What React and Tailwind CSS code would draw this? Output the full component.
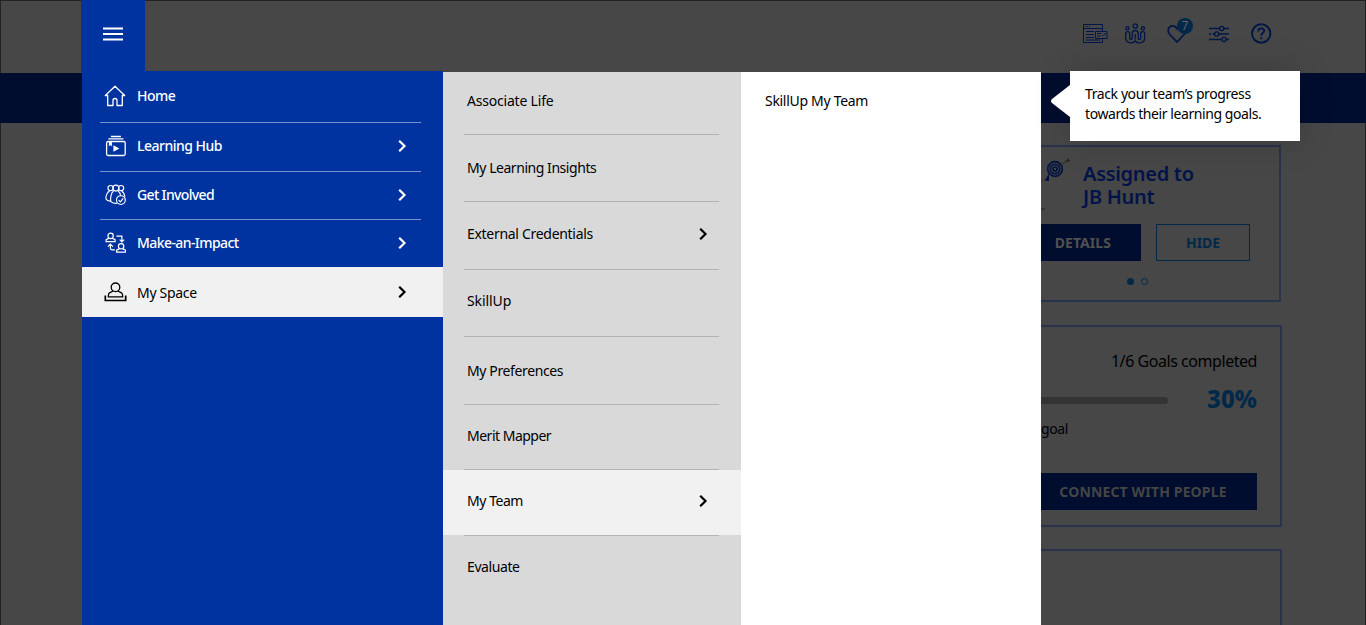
import React from "react";

const NEWS = (
  <svg width="25" height="21" viewBox="0 0 25 21" fill="none" stroke="#001648" strokeWidth="1">
    <path d="M19.500 8V1.500H.5v18h19v-4M.5 5.500h19M2 3.500h1M4 3.500h1M6 3.500h1M3 8.500h8M3 11.500h8M3 14.500h8M3 17h14" />
    <path d="M12.500 8.500h11.500v7H12.500zM14 10.500h4M14 13h4M19 11.500l1.500 1.500 2.500-3" />
  </svg>
);

const PEOPLE = (
  <svg width="21" height="21" viewBox="0 0 21 21" fill="none" stroke="#001648" strokeWidth="1.300">
    <circle cx="2.500" cy="5.300" r="1.600" />
    <circle cx="10.200" cy="3" r="2.200" />
    <circle cx="17.900" cy="5.300" r="1.600" />
    <path d="M.7 10.500c0-2.500 4-2.500 4 0V15c0 2 2.500 2 2.500 0v-4.500c0-4 6-4 6 0V15c0 2 2.500 2 2.500 0v-4.500c0-2.500 4-2.500 4 0V15c0 5-6.500 6.500-9.500 3C7.200 21.500.7 20 .7 15z" />
    <path d="M10.200 11v5.500" />
  </svg>
);

const HEART = (
  <svg width="20" height="20" viewBox="0 0 20 20" fill="none" stroke="#001648" strokeWidth="1.800">
    <path d="M10 18 2.800 10.500C.5 8 .8 4.300 3 2.800c2.500-1.700 5.200-.8 7 2 1.800-2.800 4.500-3.700 7-2 2.200 1.500 2.500 5.200.2 7.700z" />
  </svg>
);

const SLIDERS = (
  <svg width="21" height="18" viewBox="0 0 21 18" fill="none" stroke="#001648" strokeWidth="1.400">
    <path d="M0 3.500h10.500M15 3.500h5M0 9h2M3.500 9h2M10 9h10M0 14.500h12.500M17.500 14.500h2.500" />
    <circle cx="12.700" cy="3.500" r="2.100" />
    <circle cx="7.700" cy="9" r="2.100" />
    <circle cx="15" cy="14.500" r="2.100" />
  </svg>
);

const HELP = (
  <svg width="21" height="21" viewBox="0 0 21 21" fill="none" stroke="#001648" strokeWidth="1.900">
    <circle cx="10.200" cy="10.500" r="9.200" />
    <path d="M7.200 8.500c0-4 6-4 6-.7 0 2.200-3 2.200-3 4.900M10.200 14.200v2" />
  </svg>
);

const HOME = (
  <svg width="22" height="22" viewBox="0 0 22 22" fill="none" stroke="currentColor" strokeWidth="1.300" strokeLinejoin="round">
    <path d="M1.300 10.500 11 1.200l9.700 9.300h-2.400v10H13v-5c0-2.700-4-2.700-4 0v5H3.700v-10z" />
  </svg>
);

const LEARN = (
  <svg width="22" height="22" viewBox="0 0 22 22" fill="none" stroke="currentColor" strokeWidth="1.300">
    <rect x="2.600" y="6.500" width="18.600" height="14" rx="1.500" />
    <path d="M4.400 3.800h15M6.900 1.500h10" />
    <path d="M4.900 6.500h3v5L6.400 10l-1.500 1.500zM9.400 10.200v6.600l6-3.300z" fill="currentColor" stroke="none" />
  </svg>
);

const INVOLVED = (
  <svg width="22" height="22" viewBox="0 0 22 22" fill="none" stroke="currentColor" strokeWidth="1.150">
    <g transform="translate(.6 -.4)">
      <circle cx="6" cy="4.500" r="2.600" />
      <circle cx="16.500" cy="4.500" r="2.600" />
      <circle cx="11.300" cy="4.500" r="3" />
      <path d="M5 7.500c-2.500 1-4 5-3.600 8 .8 1.500 3 2.200 5 2M9 7.500c-2.500 1.500-3.500 7-2.700 10.500 1.500 1.300 4 2 6 1.800M13.500 7.500c1.500 1 2.300 2.700 2.600 4.500M17 7.500c1.800 1 2.800 3 3.300 5.500" />
      <circle cx="16.300" cy="16.500" r="4.400" />
      <path d="m14.100 16.500 1.600 1.700 3-3.500" />
    </g>
  </svg>
);

const IMPACT = (
  <svg width="22" height="22" viewBox="0 0 22 22" fill="none" stroke="currentColor" strokeWidth="1.200">
    <g transform="translate(.4 -.4)">
      <circle cx="6.200" cy="4.300" r="2.700" />
      <path d="M4.700 6.500 1.700 8v2h9V8l-3-1.500" />
      <circle cx="16.700" cy="14.700" r="2.700" />
      <path d="m15.200 17-3 1.500v2h9v-2l-3-1.500M12 4.500h5.500V10M15.300 8l2.200 2.300L19.700 8M10.500 18.300H8c-1.500 0-2-.7-2-2V12.500M3.500 15 6 12.500 8.500 15" />
    </g>
  </svg>
);

const SPACE = (
  <svg width="24" height="20" viewBox="0 0 24 20" fill="none" stroke="currentColor" strokeWidth="1.300">
    <circle cx="11.500" cy="5.300" r="4.300" />
    <path d="M9.200 9 5.500 10.800c-1 .6-1.200 2.200-1.200 4h14.400c0-1.800-.2-3.400-1.200-4L13.800 9" />
    <path d="M1.300 13.500v5h20.400v-5" strokeWidth="1.700" />
  </svg>
);

const TARGET = (
  <svg width="32" height="54" viewBox="0 0 32 54" fill="none">
    <g stroke="#001240" strokeWidth="1.700">
      <circle cx="15" cy="12" r="7.300" />
      <circle cx="15" cy="12" r="4.700" />
      <circle cx="15" cy="12" r="2" />
    </g>
    <path d="m17 10 10-6" stroke="#292929" />
    <path d="m27 5-1-2 3-2-.5 2 2 .3-3 2z" fill="#252525" />
    <path d="M9 17v7H4.500l3-5z" fill="#001240" />
    <path d="M2 21v4M5 21v3" stroke="#4d3526" />
    <path d="M0 52h5" stroke="#242424" />
  </svg>
);

function Chevron() {
  return (
    <svg width="10" height="14" viewBox="0 0 10 14" fill="none" stroke="currentColor" strokeWidth="2.200">
      <path d="M2.200 1.700 7.500 7l-5.300 5.300" />
    </svg>
  );
}

const MAIN = [
  { label: "Home", icon: HOME, row: "h-[51px] pb-px", text: "tracking-[-0.5px]" },
  { label: "Learning Hub", icon: LEARN, row: "h-[48px] pb-[2px]", text: "tracking-[-0.5px]", more: true },
  { label: "Get Involved", icon: INVOLVED, row: "h-[47px] pb-px", text: "tracking-[-0.65px]", more: true },
  { label: "Make-an-Impact", icon: IMPACT, row: "h-[47px] pb-px", text: "tracking-[-0.58px]", more: true },
];

const SUB = [
  { label: "Associate Life", row: "h-[63px] pt-[19px]", text: "tracking-[-0.2px]" },
  { label: "My Learning Insights", row: "h-[67px] pt-[23px]", text: "tracking-[-0.45px]" },
  { label: "External Credentials", row: "h-[68px] pt-[22px]", text: "tracking-[-0.3px]", more: true },
  { label: "SkillUp", row: "h-[67px] pt-[21px]", text: "tracking-[-0.1px]" },
  { label: "My Preferences", row: "h-[68px] pt-[24px]", text: "tracking-[-0.38px]" },
  { label: "Merit Mapper", row: "h-[65px] pt-[21px]", text: "tracking-[-0.5px]" },
  { label: "My Team", row: "h-[66px] pt-[21px]", text: "tracking-[-0.45px]", more: true, active: true },
  { label: "Evaluate", row: "h-[66px] pt-[21px]", text: "tracking-[-0.4px]", last: true },
];

function Backdrop() {
  return (
    <div className="flex h-[625px] flex-col border-x border-t border-[#222222] bg-[#474747]">
      <header className="flex h-[72px] shrink-0 items-start justify-end pr-[93px] pt-[22px]">
        <div className="flex h-[21px] items-center">
          <div className="w-[42px]">{NEWS}</div>
          <div className="w-[42px]">{PEOPLE}</div>
          <div className="relative w-[42px]">
            {HEART}
            <span className="absolute -top-[6px] left-[10px] flex size-4 items-center justify-center rounded-full bg-[#002949] text-[12px] leading-none text-[#626262]">7</span>
          </div>
          <div className="w-[42px]">{SLIDERS}</div>
          <div>{HELP}</div>
        </div>
      </header>
      <div className="-mx-px h-[50px] shrink-0 bg-[#000d2e]" />
      <main className="flex flex-col items-end pr-[83px] pt-[22px]">
        <section className="mr-px h-[157px] w-[280px] border-2 border-[#29334d] pl-[37px] pt-[10px]">
          <div className="flex h-[67px]">
            <div className="w-[43px]">{TARGET}</div>
            <h2 className="pt-[5px] text-[20px] font-semibold leading-[23px] tracking-[-0.3px] text-[#001449]">
              Assigned to
              <br />
              JB Hunt
            </h2>
          </div>
          <div className="flex gap-[15px] text-[14px] font-bold">
            <button className="h-[37px] w-[101px] bg-[#000d2e] pr-[30px] text-right tracking-[0.05px] text-[#505050]">DETAILS</button>
            <button className="h-[37px] w-[94px] border border-[#002949] tracking-[-0.1px] text-[#002949]">HIDE</button>
          </div>
          <div className="flex items-center gap-[7px] pl-[87px] pt-[17px]">
            <span className="size-[7px] rounded-full bg-[#002949]" />
            <span className="size-[7px] rounded-full border border-[#002949]" />
          </div>
        </section>
        <section className="mt-[23px] flex h-[202px] w-[280px] flex-col border-2 border-[#29334d] pr-[23px] pt-[22px]">
          <p className="text-right text-[16px] leading-6 tracking-[-0.45px]">1/6 Goals completed</p>
          <div className="flex h-[50px] items-center justify-between pt-px">
            <div className="mt-[3px] h-[7px] w-[164px] rounded-full bg-[#343434]" />
            <strong className="text-[24px] font-extrabold leading-none text-[#002949]">30%</strong>
          </div>
          <p className="-mt-1 pl-[37px] text-[14px] leading-5 tracking-[-0.4px]">goal</p>
          <button className="mt-[34px] h-[37px] w-[253px] bg-[#000d2e] pl-[25px] text-[14px] font-bold tracking-[0.15px] text-[#454545]">CONNECT WITH PEOPLE</button>
        </section>
        <section className="mt-[22px] h-[90px] w-[280px] border-x-2 border-t-2 border-[#29334d]" />
      </main>
    </div>
  );
}

function MainMenu() {
  return (
    <nav className="-mt-px h-[554px] w-[361px] bg-[#0033a0] text-[14px] font-medium text-white">
      {MAIN.map((item, i) => (
        <div key={item.label}>
          <div className={`flex items-center pl-[22px] pr-[36px] ${item.row}`}>
            <span className="w-[33px]">{item.icon}</span>
            <span className={`flex-1 pb-px ${item.text}`}>{item.label}</span>
            {item.more && <Chevron />}
          </div>
          {i < 3 && <div className="ml-[18px] h-px w-[321px] bg-[#7991ca]" />}
        </div>
      ))}
      <div className="flex h-[50px] items-center bg-[#f1f1f1] pl-[22px] pr-[36px] font-normal text-black">
        <span className="w-[33px]">{SPACE}</span>
        <span className="flex-1 tracking-[-0.3px]">My Space</span>
        <Chevron />
      </div>
    </nav>
  );
}

function SubMenu() {
  return (
    <nav className="h-[553px] w-[298px] bg-[#d9d9d9] text-[14px] leading-5 text-black">
      {SUB.map((item) => (
        <div key={item.label} className={`flex flex-col justify-between ${item.active ? "bg-[linear-gradient(#f1f1f1_65px,#d9d9d9_65px)]" : ""} ${item.row}`}>
          <div className="flex items-center justify-between pl-6 pr-[33px]">
            <span className={item.text}>{item.label}</span>
            {item.more && <Chevron />}
          </div>
          {!item.last && <div className="ml-[21px] h-px w-[255px] bg-[#b3b3b3]" />}
        </div>
      ))}
    </nav>
  );
}

export default function App() {
  return (
    <div className="relative h-[625px] w-[1366px] overflow-hidden font-['Noto_Sans',sans-serif] text-black">
      <Backdrop />
      <div className="absolute left-[81px] top-0 flex h-[72px] w-16 items-center justify-center bg-[#0033a0] pb-[4px]">
        <svg width="20" height="14" viewBox="0 0 20 14" stroke="white" strokeWidth="2">
          <path d="M0 1.500h20M0 7h20M0 12.500h20" />
        </svg>
      </div>
      <div className="absolute left-[82px] top-[72px] flex">
        <MainMenu />
        <SubMenu />
        <div className="h-[553px] w-[300px] bg-white pl-6 pt-[19px] text-[14px] leading-5">
          <span className="tracking-[-0.3px]">SkillUp My Team</span>
        </div>
      </div>
      <aside className="absolute left-[1070px] top-[71px] h-[70px] w-[230px] bg-white pl-[15px] pt-[13px] text-[14px] leading-5 shadow-[0_0_35px_rgba(0,0,0,0.18)]">
        <svg className="absolute -left-[20px] top-[14px]" width="20" height="32" viewBox="0 0 20 32">
          <path d="M20 0v32L2 18Q0 16 2 14z" fill="white" />
        </svg>
        <span className="block tracking-[-0.4px]">Track your team’s progress</span>
        <span className="block tracking-[-0.42px]">towards their learning goals.</span>
      </aside>
    </div>
  );
}
